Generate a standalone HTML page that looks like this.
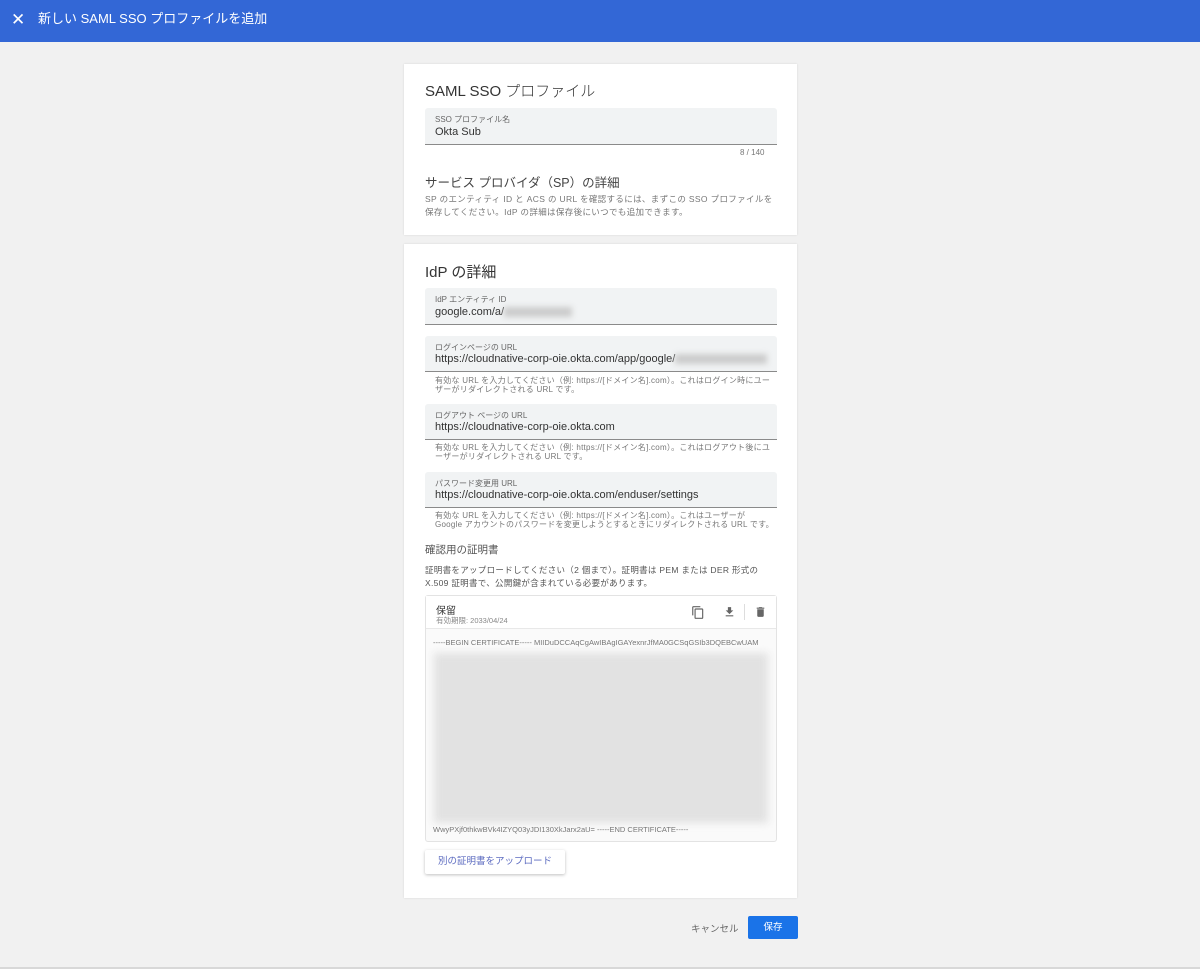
<!DOCTYPE html>
<html><head><meta charset="utf-8"><style>
*{box-sizing:border-box;margin:0;padding:0}
body{width:1200px;height:969px;background:#f1f1f1;font-family:"Liberation Sans","Noto Sans CJK JP",sans-serif;color:#333;position:relative;overflow:hidden}
.hdr{position:absolute;left:0;top:0;width:1200px;height:42px;background:#3367d6;color:#fff;font-size:13px}
.hdr .x{position:absolute;left:11px;top:11px;font-size:17px;line-height:18px}
.hdr .t{position:absolute;left:38px;top:10px;line-height:18px}
.card{position:absolute;left:404px;width:393px;background:#fff;box-shadow:0 0 2px rgba(0,0,0,.12)}
.a{position:absolute}
.fld{position:absolute;left:21px;width:352px;background:#f1f3f4;border-bottom:1px solid #8a8a8a;border-radius:3px 3px 0 0}
.lbl{position:absolute;left:10px;top:6px;font-size:8px;color:#666}
.val{position:absolute;left:10px;font-size:11px;color:#333;white-space:nowrap}
.help{position:absolute;left:31px;font-size:8px;color:#777;line-height:9px;width:340px;letter-spacing:.25px}
.blur{display:inline-block;background:#ccc;filter:blur(3px);vertical-align:middle}
</style></head><body>
<div class="hdr"><span class="x">✕</span><span class="t">新しい SAML SSO プロファイルを追加</span></div>

<div class="card" style="top:64px;height:171px">
 <div class="a" style="left:21px;top:16px;font-size:15px;color:#333;font-weight:300">SAML SSO プロファイル</div>
 <div class="fld" style="top:44px;height:37px"><div class="lbl">SSO プロファイル名</div><div class="val" style="top:18px">Okta Sub</div></div>
 <div class="a" style="left:336px;top:84px;font-size:8px;color:#777">8 / 140</div>
 <div class="a" style="left:21px;top:108px;font-size:12.5px;color:#444">サービス プロバイダ（SP）の詳細</div>
 <div class="a" style="left:21px;top:129px;font-size:8.5px;color:#777;line-height:13px;width:355px;letter-spacing:.35px">SP のエンティティ ID と ACS の URL を確認するには、まずこの SSO プロファイルを保存してください。IdP の詳細は保存後にいつでも追加できます。</div>
</div>

<div class="card" style="top:244px;height:654px">
 <div class="a" style="left:21px;top:17px;font-size:15px;color:#333">IdP の詳細</div>
 <div class="fld" style="top:44px;height:37px"><div class="lbl">IdP エンティティ ID</div><div class="val" style="top:18px">google.com/a/<span class="blur" style="width:68px;height:10px"></span></div></div>
 <div class="fld" style="top:92px;height:36px"><div class="lbl">ログインページの URL</div><div class="val" style="top:17px">https://cloudnative-corp-oie.okta.com/app/google/<span class="blur" style="width:92px;height:10px"></span></div></div>
 <div class="help" style="top:132px">有効な URL を入力してください（例: https://[ドメイン名].com）。これはログイン時にユーザーがリダイレクトされる URL です。</div>
 <div class="fld" style="top:160px;height:36px"><div class="lbl">ログアウト ページの URL</div><div class="val" style="top:17px">https://cloudnative-corp-oie.okta.com</div></div>
 <div class="help" style="top:199px">有効な URL を入力してください（例: https://[ドメイン名].com）。これはログアウト後にユーザーがリダイレクトされる URL です。</div>
 <div class="fld" style="top:228px;height:36px"><div class="lbl">パスワード変更用 URL</div><div class="val" style="top:17px">https://cloudnative-corp-oie.okta.com/enduser/settings</div></div>
 <div class="help" style="top:267px">有効な URL を入力してください（例: https://[ドメイン名].com）。これはユーザーが Google アカウントのパスワードを変更しようとするときにリダイレクトされる URL です。</div>
 <div class="a" style="left:21px;top:298px;font-size:10.5px;color:#555">確認用の証明書</div>
 <div class="a" style="left:21px;top:320px;font-size:8.5px;color:#555;line-height:13px;width:355px;letter-spacing:.3px">証明書をアップロードしてください（2 個まで）。証明書は PEM または DER 形式の X.509 証明書で、公開鍵が含まれている必要があります。</div>
 <div class="a" style="left:21px;top:351px;width:352px;height:247px;border:1px solid #e3e3e3;border-radius:3px;background:#fafafa">
  <div class="a" style="left:0;top:0;width:350px;height:33px;background:#fff;border-bottom:1px solid #e8e8e8">
   <div class="a" style="left:10px;top:6px;font-size:10px;color:#333">保留</div>
   <div class="a" style="left:10px;top:19px;font-size:7.5px;color:#888">有効期限: 2033/04/24</div>
   <svg class="a" style="left:265px;top:9px" width="14" height="15" viewBox="0 0 24 24"><path fill="#666" d="M16 1H4c-1.1 0-2 .9-2 2v14h2V3h12V1zm3 4H8c-1.1 0-2 .9-2 2v14c0 1.1.9 2 2 2h11c1.1 0 2-.9 2-2V7c0-1.1-.9-2-2-2zm0 16H8V7h11v14z"/></svg>
   <svg class="a" style="left:297px;top:9px" width="13" height="14" viewBox="0 0 24 24"><path fill="#666" d="M19 9h-4V3H9v6H5l7 7 7-7zM5 18v2h14v-2H5z"/></svg>
   <div class="a" style="left:318px;top:8px;width:1px;height:16px;background:#ddd"></div>
   <svg class="a" style="left:328px;top:9px" width="13" height="14" viewBox="0 0 24 24"><path fill="#666" d="M6 19c0 1.1.9 2 2 2h8c1.1 0 2-.9 2-2V7H6v12zM19 4h-3.5l-1-1h-5l-1 1H5v2h14V4z"/></svg>
  </div>
  <div class="a" style="left:7px;top:42px;font-size:7.5px;color:#777;white-space:nowrap">-----BEGIN CERTIFICATE----- MIIDuDCCAqCgAwIBAgIGAYexnrJfMA0GCSqGSIb3DQEBCwUAM</div>
  <div class="a" style="left:8px;top:57px;width:334px;height:170px;background:#e2e2e2;filter:blur(4px)"></div>
  <div class="a" style="left:7px;top:229px;font-size:7.5px;color:#777;white-space:nowrap">WwyPXjf0thkwBVk4IZYQ03yJDI130XkJarx2aU= -----END CERTIFICATE-----</div>
 </div>
 <div class="a" style="left:21px;top:606px;width:140px;height:24px;background:#fff;box-shadow:0 1px 3px rgba(0,0,0,.25);border-radius:2px;font-size:9.5px;color:#5c6bc0;text-align:center;line-height:24px">別の証明書をアップロード</div>
</div>

<div class="a" style="left:691px;top:921px;font-size:9.5px;color:#666">キャンセル</div>
<div class="a" style="left:748px;top:916px;width:50px;height:23px;background:#1a73e8;border-radius:2px;color:#fff;font-size:9.5px;text-align:center;line-height:23px">保存</div>
<div class="a" style="left:0;top:967px;width:1200px;height:2px;background:#d8d8d8"></div>
</body></html>
